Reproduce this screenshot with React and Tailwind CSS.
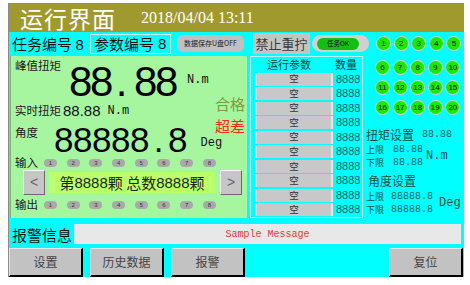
import React from 'react';

const SANS = "font-['Liberation_Sans',sans-serif]";
const MONO = "font-['Liberation_Mono',monospace]";

const Lamp = ({ n }) => (
  <div className="w-[15px] h-[15px] shrink-0 rounded-full bg-[#1ee600] border border-[#d8d8d8] flex items-center justify-center text-[8px] leading-none text-black font-['Liberation_Sans',sans-serif]">
    {n}
  </div>
);

const LampRow = ({ from }) => (
  <div className="flex gap-[2.6px]">
    {[0, 1, 2, 3, 4].map((i) => (
      <Lamp key={i} n={from + i} />
    ))}
  </div>
);

const Pill = ({ n }) => (
  <div className="w-[13px] h-[8px] shrink-0 rounded-full bg-[#a9a9a9] flex items-center justify-center text-[6px] leading-none text-[#333] font-['Liberation_Sans',sans-serif]">
    {n}
  </div>
);

const PillRow = ({ label }) => (
  <div className="flex items-center h-[12px]">
    <span className="w-[33px] shrink-0 pl-[4px] text-[11.5px] leading-none text-[#1a1a1a] whitespace-nowrap">{label}</span>
    <div className="flex gap-[9.7px]">
      {[1, 2, 3, 4, 5, 6, 7, 8].map((n) => (
        <Pill key={n} n={n} />
      ))}
    </div>
  </div>
);

const NavBtn = ({ children }) => (
  <div className="w-[22px] h-[25px] bg-[#c6c6c6] border border-t-white border-l-white border-r-[#6a6a6a] border-b-[#6a6a6a] flex items-center justify-center text-[14px] text-[#666] font-['Liberation_Sans',sans-serif]">
    {children}
  </div>
);

const BottomBtn = ({ label, className = '' }) => (
  <div className={`w-[74px] h-[29px] bg-[#c2c2c2] border-l border-t border-l-[#e6e6e6] border-t-[#e6e6e6] border-r-2 border-b-2 border-r-black border-b-black flex items-center justify-center text-[12px] text-[#444] ${className}`}>
    {label}
  </div>
);

const Limit = ({ label, value, gap }) => (
  <div className="h-[13px] flex items-center whitespace-nowrap">
    <span className="text-[9px] leading-none">{label}</span>
    <span className={`${gap} text-[10px] leading-none text-[#0a5e5e] ${MONO}`}>{value}</span>
  </div>
);

export default function App() {
  const rows = Array.from({ length: 10 });

  return (
    <div className="w-[470px] h-[285px] bg-white pt-[3px] pl-[8px] font-['Noto_Sans_CJK_SC',sans-serif]">
      <div className="w-[456px] h-[274px] border-l border-t border-[#8a8a8a] bg-[#00ffff] flex flex-col">
        {/* header */}
        <div className="h-[28px] bg-[#a09a2e] flex items-center text-white whitespace-nowrap">
          <span className="ml-[11px] text-[23px] leading-none tracking-[1px]">运行界面</span>
          <span className="ml-[25px] text-[16px] leading-none font-['Liberation_Serif',serif]">2018/04/04 13:11</span>
        </div>

        {/* row 1 */}
        <div className="h-[23px] flex items-center whitespace-nowrap">
          <span className="ml-[3px] w-[78px] shrink-0 text-[15px] leading-none text-[#111]">
            任务编号 <span className={SANS}>8</span>
          </span>
          <div className="w-[81px] shrink-0 h-[20px] border border-[#c8ffff] flex items-center pl-[3px] text-[15px] leading-none text-[#111]">
            参数编号 <span className={`ml-[4px] ${SANS}`}>8</span>
          </div>
          <div className="ml-[6px] w-[67px] shrink-0 h-[17px] rounded-[6px] bg-[#c0c0c0] flex items-center justify-center text-[7px] leading-none text-[#222]">
            数据保存U盘OFF
          </div>
          <div className="ml-[9px] w-[57px] shrink-0 h-[21px] bg-[#c4c4c4] flex items-center justify-center text-[13px] leading-none text-[#3a3a3a]">
            禁止重拧
          </div>
          <div className="ml-[2px] w-[57px] shrink-0 h-[17px] rounded-full bg-[#d0d0d0] flex items-center pl-[5px]">
            <div className="w-[42px] h-[12px] rounded-full bg-[#12c012] flex items-center justify-center text-[6.5px] leading-none text-black">
              任务OK
            </div>
          </div>
          <div className="ml-[7px]">
            <LampRow from={1} />
          </div>
        </div>

        {/* main */}
        <div className="mt-[1px] h-[162px] flex">
          {/* green panel */}
          <div className="ml-[1px] w-[237px] shrink-0 h-[162px] bg-[#a6f6a0] border-l border-[#7ab87a] flex flex-col">
            <div className="h-[100px] flex">
              <div className="w-[204px] shrink-0 flex flex-col whitespace-nowrap">
                <div className="h-[46px] flex items-start">
                  <span className="w-[57px] shrink-0 pl-[4px] mt-[2px] text-[11.5px] leading-[14px] text-[#1a1a1a]">峰值扭矩</span>
                  <div className={`mt-[8px] flex text-[42px] leading-[36px] text-black ${SANS}`}>
                    <span className="pl-[1px] tracking-[-2.35px]">88</span>
                    <span className="w-[21px] text-center">.</span>
                    <span className="pl-[2px] tracking-[-2.35px]">88</span>
                  </div>
                  <span className={`ml-[11px] mt-[17px] text-[12px] leading-[14px] text-[#111] ${MONO}`}>N.m</span>
                </div>
                <div className="h-[17px] flex items-center">
                  <span className="w-[52px] shrink-0 pl-[4px] text-[11.5px] leading-none text-[#1a1a1a]">实时扭矩</span>
                  <span className={`text-[15px] leading-none text-[#111] ${SANS}`}>88.88</span>
                  <span className={`ml-[7px] text-[12px] leading-none text-[#111] ${MONO}`}>N.m</span>
                </div>
                <div className="h-[37px] flex items-start">
                  <span className="w-[42px] shrink-0 pl-[4px] mt-[6px] text-[11.5px] leading-[14px] text-[#1a1a1a]">角度</span>
                  <div className={`mt-[6px] flex text-[35px] leading-[30px] text-black ${SANS}`}>
                    <span className="pl-[1px] tracking-[-0.46px]">88888</span>
                    <span className="w-[19px] text-center">.</span>
                    <span>8</span>
                  </div>
                  <span className={`ml-[13px] mt-[17px] text-[12px] leading-[14px] text-[#111] ${MONO}`}>Deg</span>
                </div>
              </div>
              <div className="flex flex-col whitespace-nowrap">
                <span className="mt-[40px] text-[15px] leading-[16px] text-[#7e9a3a]">合格</span>
                <span className="mt-[6px] text-[15px] leading-[16px] text-[#ff2a1a]">超差</span>
              </div>
            </div>

            <div className="mt-[1px]">
              <PillRow label="输入" />
            </div>

            <div className="mt-[1px] h-[25px] flex items-center">
              <div className="ml-[12px]">
                <NavBtn>&lt;</NavBtn>
              </div>
              <div className="ml-[4px] w-[166px] h-[21px] bg-[#bcff6c] flex items-center justify-center text-[15px] leading-none text-[#1a2a10] whitespace-nowrap">
                第<span className={SANS}>8888</span>颗 总数<span className={SANS}>8888</span>颗
              </div>
              <div className="ml-[5px]">
                <NavBtn>&gt;</NavBtn>
              </div>
            </div>

            <div className="mt-[4px]">
              <PillRow label="输出" />
            </div>
          </div>

          {/* parameter table */}
          <div className="ml-[3px] w-[113px] shrink-0 h-[162px] border border-[#b8ffff] flex flex-col">
            <div className="h-[15px] flex items-center text-[11px] leading-none text-[#0e3a3a] whitespace-nowrap">
              <span className="ml-[16px]">运行参数</span>
              <span className="ml-[24px]">数量</span>
            </div>
            {rows.map((_, i) => (
              <div key={i} className="h-[14.6px] flex items-center">
                <div className="ml-[4px] w-[78px] shrink-0 h-[13px] bg-[#c8c8c8] border-x-2 border-[#e6e6e6] flex items-center justify-center text-[9.5px] leading-none text-[#333]">
                  空
                </div>
                <span className={`ml-[3px] text-[11px] leading-none text-[#0a5e5e] ${SANS}`}>8888</span>
              </div>
            ))}
          </div>

          {/* right column */}
          <div className="flex-1 flex flex-col text-[#184848] whitespace-nowrap">
            <div className="ml-[12px] mt-[4px] flex flex-col gap-[5px]">
              <LampRow from={6} />
              <LampRow from={11} />
              <LampRow from={16} />
            </div>

            <div className="ml-[3px] mt-[13px] flex items-center h-[14px]">
              <span className="text-[12px] leading-none">扭矩设置</span>
              <span className={`ml-[8px] text-[10px] leading-none text-[#0a5e5e] ${MONO}`}>88.88</span>
            </div>
            <div className="ml-[3px] mt-[1px] flex items-center">
              <div className="flex flex-col">
                <Limit label="上限" value="88.88" gap="ml-[9px]" />
                <Limit label="下限" value="88.88" gap="ml-[9px]" />
              </div>
              <span className={`ml-[3px] text-[12px] leading-none ${MONO}`}>N.m</span>
            </div>

            <div className="ml-[5px] mt-[5px] h-[14px] flex items-center text-[12px] leading-none">角度设置</div>
            <div className="ml-[3px] mt-[2px] flex items-center">
              <div className="flex flex-col">
                <Limit label="上限" value="88888.8" gap="ml-[7px]" />
                <Limit label="下限" value="88888.8" gap="ml-[7px]" />
              </div>
              <span className={`ml-[6px] text-[12px] leading-none ${MONO}`}>Deg</span>
            </div>
          </div>
        </div>

        {/* alarm row */}
        <div className="h-[30px] flex items-start pt-[6px]">
          <span className="ml-[3px] w-[62px] shrink-0 h-[20px] flex items-center text-[15px] leading-none text-[#111] whitespace-nowrap">报警信息</span>
          <div className={`w-[387px] h-[20px] bg-[#e8e8e8] flex items-center justify-center text-[10px] text-[#e03c3c] ${MONO}`}>
            Sample Message
          </div>
        </div>

        {/* buttons */}
        <div className="h-[29px] flex">
          <BottomBtn label="设置" />
          <BottomBtn label="历史数据" className="ml-[7px] w-[73px]" />
          <BottomBtn label="报警" className="ml-[7px] w-[73px]" />
          <BottomBtn label="复位" className="ml-auto mr-[1px] w-[73px]" />
        </div>
      </div>
    </div>
  );
}
